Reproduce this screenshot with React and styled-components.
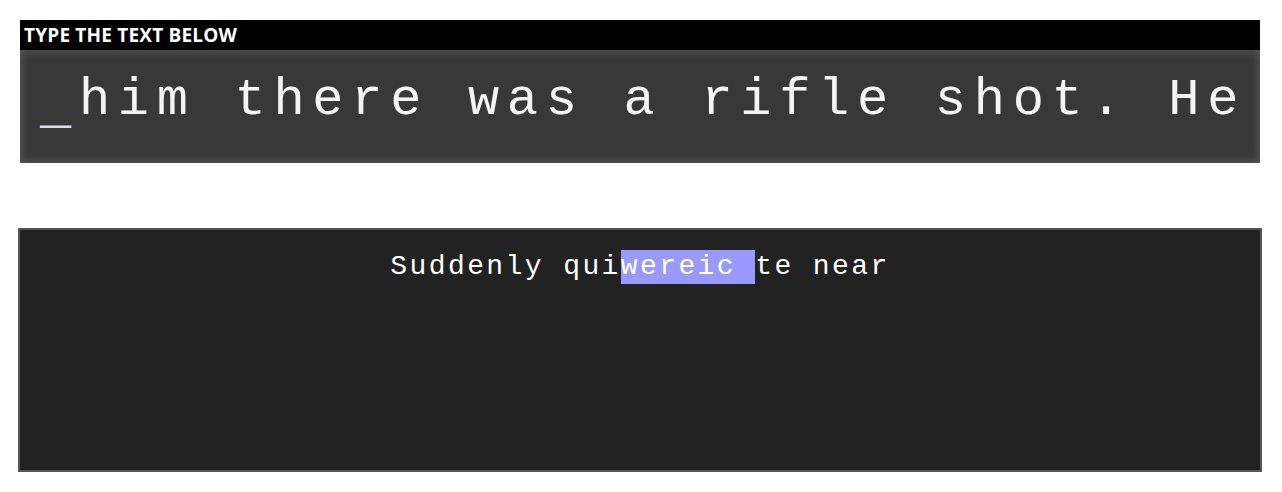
import React from 'react';
import styled, { createGlobalStyle } from 'styled-components';

const GlobalStyle = createGlobalStyle`
    html, body {
        margin: 0;
        padding: 0;
        background: #fff;
    }
`;

const Page = styled.div`
    padding: 20px 20px 20px 18px;
    display: flex;
    flex-direction: column;
    gap: 65px;
`;

const Prompt = styled.section`
    margin: 0 2px;
`;

const PromptTitle = styled.h3`
    margin: 0;
    height: 30px;
    background: #000;
    color: #fff;
    font-family: "Open Sans", sans-serif;
    font-weight: 700;
    font-size: 19px;
    line-height: 31px;
    padding-left: 4px;
    letter-spacing: 0.2px;
`;

const PromptText = styled.div`
    height: 113px;
    box-sizing: border-box;
    background: #383838;
    box-shadow: inset 0 0 8px 2px #555;
    display: flex;
    align-items: center;
    padding: 0 0 4px 20px;
    overflow: hidden;
`;

const PromptLine = styled.div`
    white-space: pre;
    font-family: "Liberation Mono", monospace;
    font-size: 52px;
    letter-spacing: 7.7px;
    color: #f4f4f4;
`;

const Cursor = styled.span`
    color: #dcdcfc;
    font-weight: 700;
    vertical-align: -8px;
`;

const Typed = styled.section`
    height: 244px;
    box-sizing: border-box;
    background: #222;
    border: 2px solid #555;
    display: flex;
    justify-content: center;
    padding-top: 20px;
`;

const TypedLine = styled.div`
    height: 34px;
    line-height: 34px;
    white-space: pre;
    font-family: "Liberation Mono", monospace;
    font-size: 28px;
    letter-spacing: 2.4px;
    color: #fff;
`;

const Mark = styled.span`
    display: inline-block;
    background: #9999ff;
    height: 34px;
`;

function App() {
    const before = 'Suddenly qui';
    const marked = 'wereic ';
    const after = 'te near';

    return (
        <>
            <GlobalStyle />
            <Page>
                <Prompt>
                    <PromptTitle>TYPE THE TEXT BELOW</PromptTitle>
                    <PromptText>
                        <PromptLine>
                            <Cursor>_</Cursor>him there was a rifle shot. He
                        </PromptLine>
                    </PromptText>
                </Prompt>
                <Typed>
                    <TypedLine>
                        {before}<Mark>{marked}</Mark>{after}
                    </TypedLine>
                </Typed>
            </Page>
        </>
    );
}

export default App;
